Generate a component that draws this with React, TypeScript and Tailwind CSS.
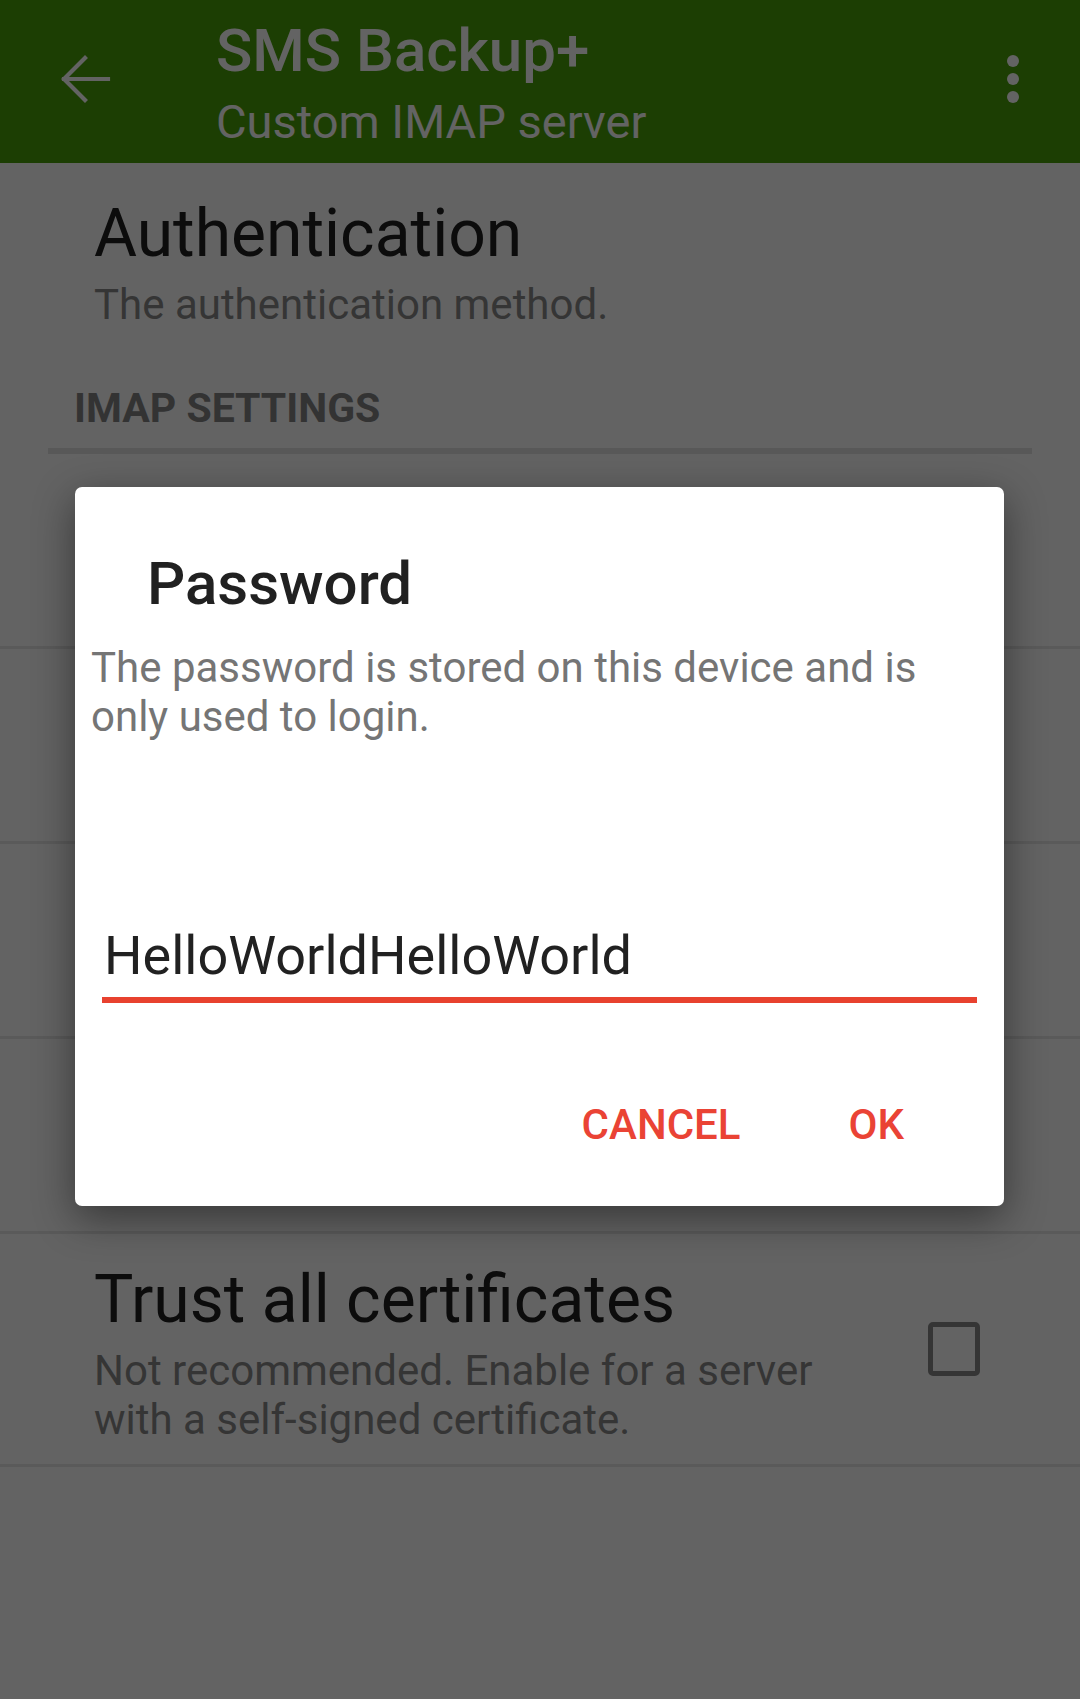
import React from 'react'

// rows hidden behind the dialog: only their dividers show
const hiddenRows = [0, 1, 2, 3]

function ArrowBack() {
  return (
    <svg width="70" height="70" viewBox="0 0 70 70" fill="none">
      <path d="M59 35H15M36 14L15 35L36 56" stroke="#ffffff" strokeWidth="4.2" strokeLinecap="square" />
    </svg>
  )
}

function MoreVert() {
  return (
    <svg width="72" height="72" viewBox="0 0 24 24" fill="#ffffff">
      <circle cx="12" cy="6" r="2" />
      <circle cx="12" cy="12" r="2" />
      <circle cx="12" cy="18" r="2" />
    </svg>
  )
}

export default function App() {
  return (
    <div className="relative w-[1080px] h-[1699px] overflow-hidden bg-white font-[family-name:Roboto,sans-serif]">
      {/* Toolbar */}
      <div className="h-[163px] bg-[#489f08] flex items-start">
        <div className="w-[170px] pl-[49px] pt-[44px]">
          <ArrowBack />
        </div>
        <div className="flex flex-col pt-[15px] pl-[46px] text-white">
          <div className="text-[60px] leading-[72px] font-medium">SMS Backup+</div>
          <div className="text-[47px] leading-[56px] mt-[7px]">Custom IMAP server</div>
        </div>
        <div className="ml-auto mr-[31px] mt-[43px]">
          <MoreVert />
        </div>
      </div>

      {/* Preferences */}
      <div className="flex flex-col">
        <div className="px-[94px] pt-[32px] h-[210px]">
          <div className="text-[66px] leading-[78px] text-[#212121]">Authentication</div>
          <div className="text-[42px] leading-[49px] mt-[7px] text-[#8a8a8a]">The authentication method.</div>
        </div>
        <div className="mx-[48px] border-b-[6px] border-[#e2e2e2] h-[81px] pt-[11px]">
          <div className="pl-[26px] text-[41px] leading-[48px] font-bold text-[#858585]">IMAP SETTINGS</div>
        </div>
        {hiddenRows.map(i => (
          <div key={i} className="h-[195px] border-b-[3px] border-[#e7e7e7]" />
        ))}
        <div className="h-[233px] border-b-[3px] border-[#e7e7e7] pl-[94px] pr-[100px] flex items-center">
          <div className="flex-1 pt-[7px]">
            <div className="text-[66px] leading-[78px] text-[#212121]">Trust all certificates</div>
            <div className="text-[42px] leading-[49px] mt-[7px] text-[#8a8a8a] w-[740px]">
              Not recommended. Enable for a server with a self-signed certificate.
            </div>
          </div>
          <div className="w-[52px] h-[54px] border-[5px] border-[#8a8a8a] rounded-[5px]" />
        </div>
      </div>

      {/* Scrim */}
      <div className="absolute inset-0 bg-[rgba(0,0,0,0.61)]" />

      {/* Dialog */}
      <div className="absolute left-[75px] top-[487px] w-[929px] h-[719px] bg-white rounded-[7px] shadow-[0_12px_40px_rgba(0,0,0,0.45)] flex flex-col">
        <div className="pl-[72px] pt-[61px] text-[60px] leading-[72px] font-medium text-[#212121]">Password</div>
        <div className="pl-[16px] pr-[60px] mt-[23px] text-[42px] leading-[49px] text-[#757575]">
          The password is stored on this device and is only used to login.
        </div>
        <div className="ml-[27px] w-[875px] mt-[183px] border-b-[6px] border-[#e8412f]">
          <div className="pl-[2px] text-[54px] leading-[64px] text-[#212121] pb-[9px]">HelloWorldHelloWorld</div>
        </div>
        <div className="flex justify-end items-center gap-[108px] pr-[100px] mt-[97px] text-[42px] leading-[50px] font-medium text-[#ea4335]">
          <span>CANCEL</span>
          <span>OK</span>
        </div>
      </div>
    </div>
  )
}
